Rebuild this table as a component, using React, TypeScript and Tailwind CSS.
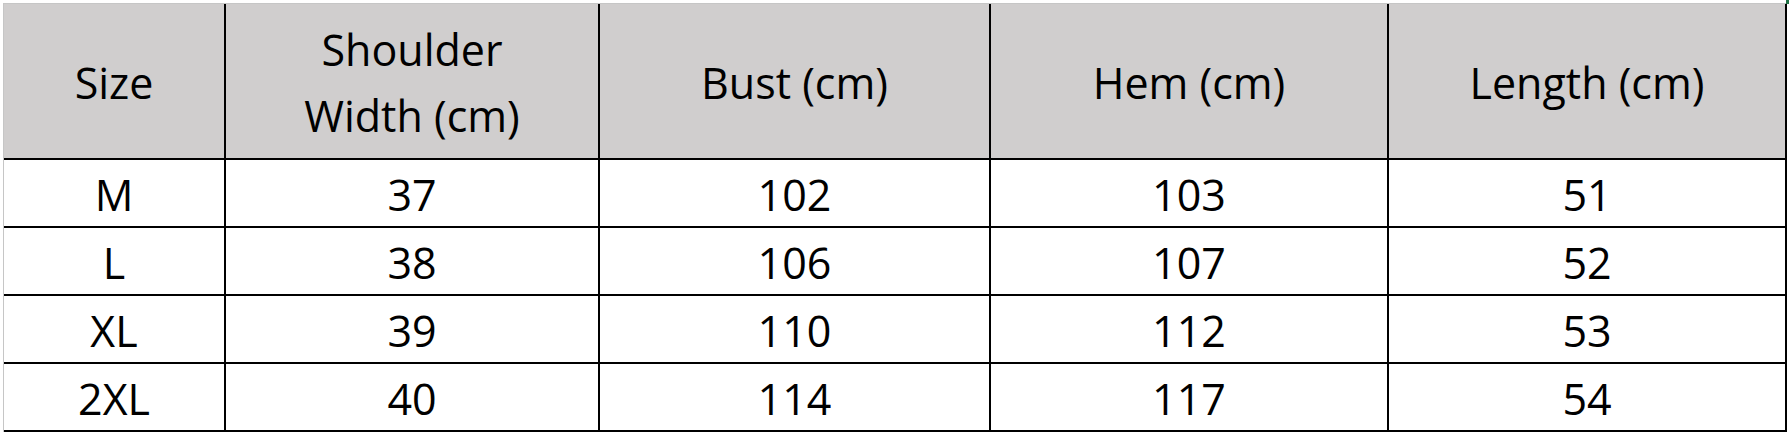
import React from "react";

const headers: React.ReactNode[] = [
  "Size",
  <span key="sw" className="block leading-[66px]">
    Shoulder
    <br />
    Width (cm)
  </span>,
  "Bust (cm)",
  "Hem (cm)",
  "Length (cm)",
];

const rows: string[][] = [
  ["M", "37", "102", "103", "51"],
  ["L", "38", "106", "107", "52"],
  ["XL", "39", "110", "112", "53"],
  ["2XL", "40", "114", "117", "54"],
];

export default function App() {
  return (
    <div
      className="relative w-[1790px] h-[435px] bg-white overflow-hidden"
      style={{ fontFamily: '"Open Sans", "Noto Sans", sans-serif' }}
    >
      <div className="absolute left-[1786px] top-0 w-[3px] h-[4px] bg-[#217346]" />
      <div className="ml-[3px] mt-[3px] w-[1784px] border-l border-t border-[#c6c6c6]">
        <div className="grid grid-cols-[222px_374px_391px_398px_398px] text-black text-[43px]">
          {headers.map((h, i) => (
            <div
              key={i}
              className="h-[156px] bg-[#d0cece] border-r-2 border-b-2 border-black flex items-center justify-center text-center pt-[4px]"
            >
              {h}
            </div>
          ))}
          {rows.map((r, ri) =>
            r.map((c, ci) => (
              <div
                key={`${ri}-${ci}`}
                className="h-[68px] bg-white border-r-2 border-b-2 border-black flex items-center justify-center pt-[4px]"
              >
                {c}
              </div>
            ))
          )}
        </div>
      </div>
    </div>
  );
}
